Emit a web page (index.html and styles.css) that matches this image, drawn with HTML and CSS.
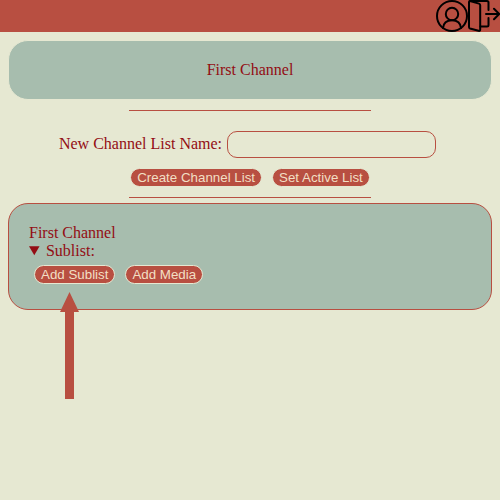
FILE: index.html
```html
<!DOCTYPE html>
<html lang="en">
<head>
<meta charset="utf-8">
<title>Channel Lists</title>
<link rel="stylesheet" href="styles.css">
</head>
<body>
<header class="topbar">
  <svg class="icon" viewBox="0 0 32 32" aria-label="Account">
    <circle cx="16" cy="16" r="15"/>
    <circle cx="16" cy="14" r="6.200"/>
    <path d="M7 28C7.500 23 11 20.200 16 20.200S24.500 23 25 28"/>
  </svg>
  <svg class="icon" viewBox="0 0 32 32" aria-label="Log out">
    <path d="M2 1L11 3.600Q12.200 4 12.200 5.200V29.500Q12.200 31.300 10.500 30.800L2 28.500Q1 28.200 1 27V2Q1 1 2 1Z"/>
    <path d="M2 1H19Q20.500 1 20.500 2.500V10M20.500 18V25Q20.500 26.500 19 26.500H12.500"/>
    <path d="M18 14H31M26 8.800L31.200 14L26 19.200"/>
  </svg>
</header>
<main class="page">
  <section class="active-list">First Channel</section>
  <hr class="rule">
  <form class="list-form">
    <div class="field">
      <label class="label" for="name">New Channel List Name:</label>
      <input id="name" class="name-input" type="text">
    </div>
    <div class="actions">
      <button class="btn" type="button">Create Channel List</button>
      <button class="btn" type="button">Set Active List</button>
    </div>
  </form>
  <hr class="rule">
  <section class="channel">
    <div>First Channel</div>
    <details open>
      <summary>Sublist:</summary>
      <div class="sub-actions">
        <button class="btn" type="button">Add Sublist</button>
        <button class="btn" type="button">Add Media</button>
      </div>
    </details>
    <svg class="pointer" viewBox="0 0 19 107" aria-hidden="true">
      <path d="M9.500 0L19 20H14V107H5V20H0Z"/>
    </svg>
  </section>
</main>
</body>
</html>
```
FILE: styles.css
```css
* {
  box-sizing: border-box;
}

body {
  margin: 0;
  min-height: 100vh;
  background: #e6e8d2;
  color: #930d14;
  font: 16px/18px "Liberation Serif", serif;
}

.topbar {
  display: flex;
  justify-content: flex-end;
  height: 32px;
  background: #b84f41;
}

.icon {
  width: 32px;
  height: 32px;
  fill: none;
  stroke: #000;
  stroke-width: 2;
  stroke-linecap: round;
  stroke-linejoin: round;
}

.page {
  padding: 8px;
}

.active-list,
.channel {
  padding: 20px;
  border: 1px solid #e6e8d2;
  border-radius: 20px;
  background: #a7bdae;
}

.active-list {
  height: 60px;
  text-align: center;
}

.rule {
  width: 50%;
  height: 1px;
  margin: 10px auto;
  border: 0;
  background: #b84f41;
}

.list-form {
  padding-top: 10px;
}

.field,
.actions {
  display: flex;
  justify-content: center;
  align-items: center;
}

.label {
  padding-bottom: 2px;
}

.name-input {
  width: 209px;
  height: 27px;
  margin: 0 5px;
  border: 1px solid #b84f41;
  border-radius: 10px;
  background: #e6e8d2;
}

.actions {
  gap: 10px;
  margin-top: 10px;
}

.btn {
  height: 19px;
  padding: 1px 6px;
  border: 1px solid #e6e8d2;
  border-radius: 10px;
  background: #b84f41;
  color: #f2dfc4;
  font: 13.333px/15px "Liberation Sans", sans-serif;
}

.channel {
  position: relative;
  height: 107px;
  margin-top: -5px;
  border-color: #b84f41;
}

.sub-actions {
  display: flex;
  gap: 10px;
  padding: 5px;
}

.pointer {
  position: absolute;
  left: 51px;
  top: 88px;
  width: 19px;
  height: 107px;
  fill: #b84f41;
}
```
